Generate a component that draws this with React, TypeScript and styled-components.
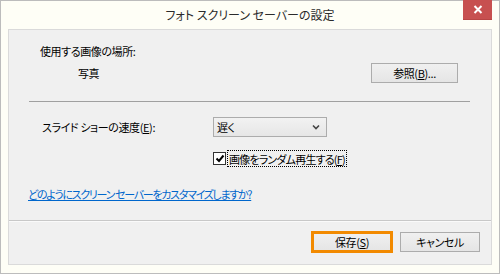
import React from "react";
import styled, { createGlobalStyle } from "styled-components";

const Global = createGlobalStyle`
  html, body { margin: 0; padding: 0; background: #fefef6; }
  body {
    font-family: "Noto Sans CJK JP", "Noto Sans", sans-serif;
    font-feature-settings: "palt";
    color: #000;
  }
`;

const Window = styled.div`
  box-sizing: border-box;
  width: 500px;
  height: 274px;
  border: 1px solid #bcbcbc;
  background: #fefef6;
  display: flex;
  flex-direction: column;
`;

const TitleBar = styled.div`
  position: relative;
  height: 28px;
  flex: none;
  display: flex;
  align-items: center;
  justify-content: center;
  font-size: 12px;
  line-height: 16px;
  color: #2b2b2b;
`;

const CloseButton = styled.div`
  position: absolute;
  top: -1px;
  right: 7px;
  width: 29px;
  height: 20px;
  background: #c75050;
  border-bottom: 1px solid #b84545;
  box-sizing: border-box;
  display: flex;
  align-items: center;
  justify-content: center;
`;

const Panel = styled.div`
  flex: 1;
  margin: 0 7px 8px;
  border: 1px solid #dadada;
  background: #f0f0f0;
  display: flex;
  flex-direction: column;
  font-size: 11px;
  line-height: 16px;
  letter-spacing: -0.4px;
`;

const Main = styled.div`
  flex: 1;
  display: flex;
  flex-direction: column;
  padding-top: 13px;
`;

const Row = styled.div<{ $top: number; $left: number; $h?: number }>`
  display: flex;
  align-items: center;
  margin-top: ${(p) => p.$top}px;
  margin-left: ${(p) => p.$left}px;
  height: ${(p) => (p.$h ? `${p.$h}px` : "auto")};
`;

const Separator = styled.div`
  margin: 18px 21px 0 20px;
  height: 1px;
  background: #a0a0a0;
`;

const WinButton = styled.div<{ $w: number; $focus?: boolean }>`
  box-sizing: border-box;
  width: ${(p) => p.$w}px;
  height: 20px;
  border: 1px solid #acacac;
  background: linear-gradient(#f0f0f0, #e5e5e5);
  display: flex;
  align-items: center;
  justify-content: center;
  color: #000;
  outline: ${(p) => (p.$focus ? "3px solid #f28a00" : "none")};
  outline-offset: -2px;
`;

const BrowseButton = styled(WinButton)`
  margin-left: auto;
  margin-right: 33px;
`;

const Label = styled.span<{ $w?: number }>`
  display: inline-block;
  width: ${(p) => (p.$w ? `${p.$w}px` : "auto")};
`;

const Select = styled.div`
  box-sizing: border-box;
  width: 114px;
  height: 20px;
  border: 1px solid #acacac;
  background: linear-gradient(#f2f2f2, #e6e6e6);
  display: flex;
  align-items: center;
  padding: 0 6px 0 3px;
  justify-content: space-between;
`;

const CheckBox = styled.div`
  box-sizing: border-box;
  width: 13px;
  height: 13px;
  border: 1px solid #333;
  background: #fff;
  display: flex;
  align-items: center;
  justify-content: center;
`;

const FocusLabel = styled.span`
  box-sizing: border-box;
  margin-left: 1px;
  height: 17px;
  padding: 0 1px;
  border: 1px dotted #000;
  display: flex;
  align-items: center;
  letter-spacing: -0.8px;
`;

const Link = styled.a`
  color: #0066cc;
  text-decoration: underline;
  letter-spacing: -1.3px;
  cursor: pointer;
`;

const Footer = styled.div`
  flex: none;
  box-sizing: border-box;
  height: 44px;
  border-top: 1px solid #c8c8c8;
  box-shadow: inset 0 1px 0 #fafafa;
  display: flex;
  justify-content: flex-end;
  align-items: flex-start;
  gap: 8px;
  padding: 11px 11px 0 0;
`;

const U = styled.span`
  text-decoration: underline;
`;

export default function App() {
  return (
    <>
      <Global />
      <Window>
        <TitleBar>
          フォト スクリーン セーバーの設定
          <CloseButton>
            <svg width="10" height="9" viewBox="0 0 10 9">
              <path d="M1.5 1 L8.5 8 M8.5 1 L1.5 8" stroke="#fff" strokeWidth="2" />
            </svg>
          </CloseButton>
        </TitleBar>
        <Panel>
          <Main>
            <Row $top={0} $left={31}>使用する画像の場所:</Row>
            <Row $top={4} $left={69} $h={20}>
              <Label>写真</Label>
              <BrowseButton $w={87}>
                参照(<U>B</U>)...
              </BrowseButton>
            </Row>
            <Separator />
            <Row $top={15} $left={33} $h={20}>
              <Label $w={171}>
                スライド ショーの速度(<U>E</U>):
              </Label>
              <Select>
                <span>遅く</span>
                <svg width="8" height="6" viewBox="0 0 8 6">
                  <path d="M1 1.5 L4 4.5 L7 1.5" stroke="#444" strokeWidth="1.6" fill="none" />
                </svg>
              </Select>
            </Row>
            <Row $top={13} $left={204} $h={17}>
              <CheckBox>
                <svg width="10" height="9" viewBox="0 0 10 9">
                  <path d="M1.5 4.5 L4 7 L8.5 1.5" stroke="#000" strokeWidth="2" fill="none" />
                </svg>
              </CheckBox>
              <FocusLabel>
                画像をランダム再生する(<U>F</U>)
              </FocusLabel>
            </Row>
            <Row $top={19} $left={19}>
              <Link>どのようにスクリーン セーバーをカスタマイズしますか?</Link>
            </Row>
          </Main>
          <Footer>
            <WinButton $w={80} $focus>
              保存(<U>S</U>)
            </WinButton>
            <WinButton $w={80}>キャンセル</WinButton>
          </Footer>
        </Panel>
      </Window>
    </>
  );
}
